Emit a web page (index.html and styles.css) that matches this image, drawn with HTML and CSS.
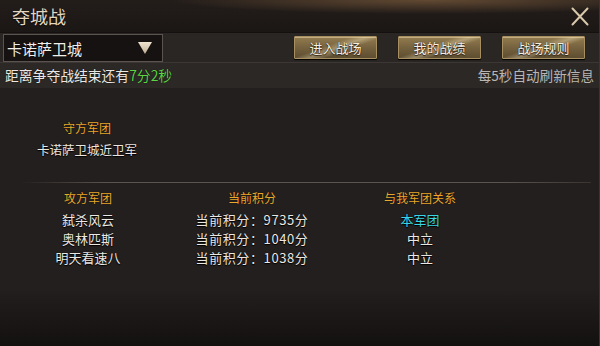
FILE: index.html
```html
<!DOCTYPE html>
<html lang="zh-CN">
<head>
<meta charset="utf-8">
<title>夺城战</title>
<link rel="stylesheet" href="styles.css">
</head>
<body>
<div class="window">
  <header class="titlebar">
    <h1 class="title">夺城战</h1>
    <button class="close" aria-label="关闭">
      <svg width="18" height="19" viewBox="0 0 18 19"><path d="M1.5 1.5 L16.5 17.5 M16.5 1.5 L1.5 17.5" stroke="#d9c9ab" stroke-width="2" stroke-linecap="round" fill="none"/></svg>
    </button>
  </header>
  <div class="toolbar">
    <div class="select">
      <span class="select-text">卡诺萨卫城</span>
      <svg class="tri" width="14" height="12" viewBox="0 0 14 12"><defs><linearGradient id="tg" x1="0" y1="0" x2="0" y2="1"><stop offset="0" stop-color="#f0e4d0"/><stop offset="1" stop-color="#bfae93"/></linearGradient></defs><path d="M0 0 H14 L7 12 Z" fill="url(#tg)"/></svg>
    </div>
    <div class="btns">
      <button class="btn">进入战场</button>
      <button class="btn">我的战绩</button>
      <button class="btn">战场规则</button>
    </div>
  </div>
  <div class="status">
    <span class="countdown">距离争夺战结束还有<span class="green">7分2秒</span></span>
    <span class="refresh">每5秒自动刷新信息</span>
  </div>
  <main class="content">
    <section class="defender">
      <div class="head">守方军团</div>
      <div class="val">卡诺萨卫城近卫军</div>
    </section>
    <div class="sep"></div>
    <section class="table">
      <div class="head">攻方军团</div>
      <div class="head">当前积分</div>
      <div class="head">与我军团关系</div>

      <div class="cell">弑杀风云</div>
      <div class="cell score">当前积分：9735分</div>
      <div class="cell cyan">本军团</div>

      <div class="cell">奥林匹斯</div>
      <div class="cell score">当前积分：1040分</div>
      <div class="cell">中立</div>

      <div class="cell">明天看速八</div>
      <div class="cell score">当前积分：1038分</div>
      <div class="cell">中立</div>
    </section>
  </main>
</div>
</body>
</html>
```
FILE: styles.css
```css
* { box-sizing: border-box; }
html, body {
  margin: 0;
  padding: 0;
  width: 600px;
  height: 346px;
  overflow: hidden;
  background: #1a1615;
  font-family: "Noto Sans CJK SC", "Noto Sans", sans-serif;
}
.window {
  width: 600px;
  height: 346px;
  display: flex;
  flex-direction: column;
  background: #231f1e;
  border-right: 1px solid #3a3432;
}
.titlebar {
  height: 33px;
  flex: none;
  display: flex;
  align-items: center;
  justify-content: space-between;
  padding: 0 10px 0 12px;
  background:
    radial-gradient(ellipse 260px 14px at 430px 0, rgba(150,110,70,0.55), rgba(150,110,70,0) 100%),
    linear-gradient(#231d1a, #1b1715);
  border-bottom: 1px solid #141110;
}
.title {
  margin: 0;
  font-size: 18px;
  font-weight: 400;
  line-height: 1;
  color: #e4d6c1;
  text-shadow: 0 1px 1px #000;
}
.close {
  border: 0;
  background: none;
  padding: 0;
  width: 18px;
  height: 19px;
  display: flex;
}
.toolbar {
  height: 29px;
  flex: none;
  display: flex;
  align-items: center;
  justify-content: space-between;
  padding: 0 14px 0 3px;
  background: #2a2624;
}
.select {
  width: 160px;
  height: 28px;
  margin-top: 1px;
  display: flex;
  align-items: center;
  justify-content: space-between;
  padding: 0 10px 0 3px;
  background: #151211;
  border: 1px solid #5a5350;
}
.select-text {
  font-size: 15px;
  color: #f2efea;
  line-height: 1;
  text-shadow: 0 0 1px #000;
}
.tri { display: block; }
.btns {
  display: flex;
  gap: 21px;
}
.btn {
  width: 83px;
  height: 23px;
  padding: 0;
  border: 1px solid #a88f60;
  border-radius: 1px;
  background:
    linear-gradient(160deg, rgba(255,240,200,0) 40%, rgba(255,240,200,0.35) 52%, rgba(255,240,200,0) 64%),
    linear-gradient(#927b4f, #73603d 55%, #5e4d30);
  box-shadow: inset 0 1px 0 rgba(255,235,190,0.45), 0 1px 1px #000;
  color: #f6efe2;
  font-family: "Noto Sans CJK SC", sans-serif;
  font-size: 13px;
  line-height: 1;
  text-shadow: 0 1px 1px #2a1f10, 0 0 1px #2a1f10;
}
.status {
  height: 26px;
  flex: none;
  display: flex;
  align-items: center;
  justify-content: space-between;
  padding: 0 5px 0 5px;
  background: #2c2826;
  border-top: 1px solid #3c3734;
  font-size: 13.8px;
  line-height: 1;
}
.countdown {
  color: #ebe8e4;
  text-shadow: 0 0 1px #000;
}
.green { color: #5cd444; }
.refresh { color: #b9b6b2; font-size: 13.6px; }
.content {
  flex: 1;
  display: flex;
  flex-direction: column;
  background: linear-gradient(#231f1e 0, #231f1e 200px, #131010 258px);
  padding-top: 33px;
}
.defender {
  width: 150px;
  margin-left: 12px;
  display: flex;
  flex-direction: column;
  align-items: center;
  gap: 9px;
}
.head {
  color: #eca82c;
  font-size: 12px;
  line-height: 13px;
  text-align: center;
  text-shadow: 0 0 1px #000;
}
.val, .cell {
  color: #ebe8e4;
  font-size: 12.5px;
  line-height: 13px;
  text-align: center;
  text-shadow: 0 0 1px #000, 0 1px 1px #000;
}
.sep {
  height: 1px;
  margin: 26px 8px 0 20px;
  background: linear-gradient(90deg, rgba(90,84,80,0), #5a5450 15%, #5a5450 85%, rgba(90,84,80,0.4));
}
.table {
  display: grid;
  grid-template-columns: 150px 178px 158px;
  margin-left: 13px;
  margin-top: 8px;
  row-gap: 6px;
}
.table .head { margin-bottom: 3px; }
.cell { font-size: 13px; }
.score { letter-spacing: 0.6px; }
.cyan { color: #39d6e6; }
```
